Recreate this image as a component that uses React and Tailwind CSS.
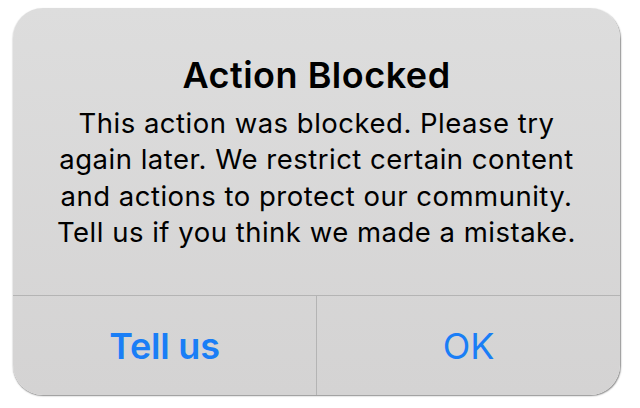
export default function App() {
  return (
    <div
      className="w-[640px] h-[408px] bg-white pt-[8px] pl-[13px]"
      style={{ fontFamily: 'Inter, "Noto Sans", Roboto, sans-serif' }}
    >
      <div className="w-[607px] h-[387px] rounded-[30px] bg-gradient-to-b from-[#dddddd] to-[#d4d3d3] flex flex-col overflow-hidden shadow-[0.5px_1px_1.5px_rgba(0,0,0,0.45)]">
        {/* Message */}
        <div className="h-[287px] flex flex-col items-center pt-[45px] text-black text-center">
          <h1 className="text-[36px] leading-[44px] font-semibold tracking-[0.5px]">Action Blocked</h1>
          <p className="mt-[8px] text-[27.5px] leading-[36.3px] tracking-[0.5px]">
            This action was blocked. Please try
            <br />
            again later. We restrict certain content
            <br />
            and actions to protect our community.
            <br />
            Tell us if you think we made a mistake.
          </p>
        </div>

        {/* Buttons */}
        <div className="flex-1 flex border-t border-[#b4b4b4]">
          <button className="flex-1 flex items-center justify-center text-[36px] font-semibold text-[#1a7ef6] tracking-[-0.2px]">
            Tell us
          </button>
          <div className="w-px bg-[#b4b4b4]" />
          <button className="flex-1 flex items-center justify-center text-[36px] text-[#1a7ef6]">
            OK
          </button>
        </div>
      </div>
    </div>
  );
}
